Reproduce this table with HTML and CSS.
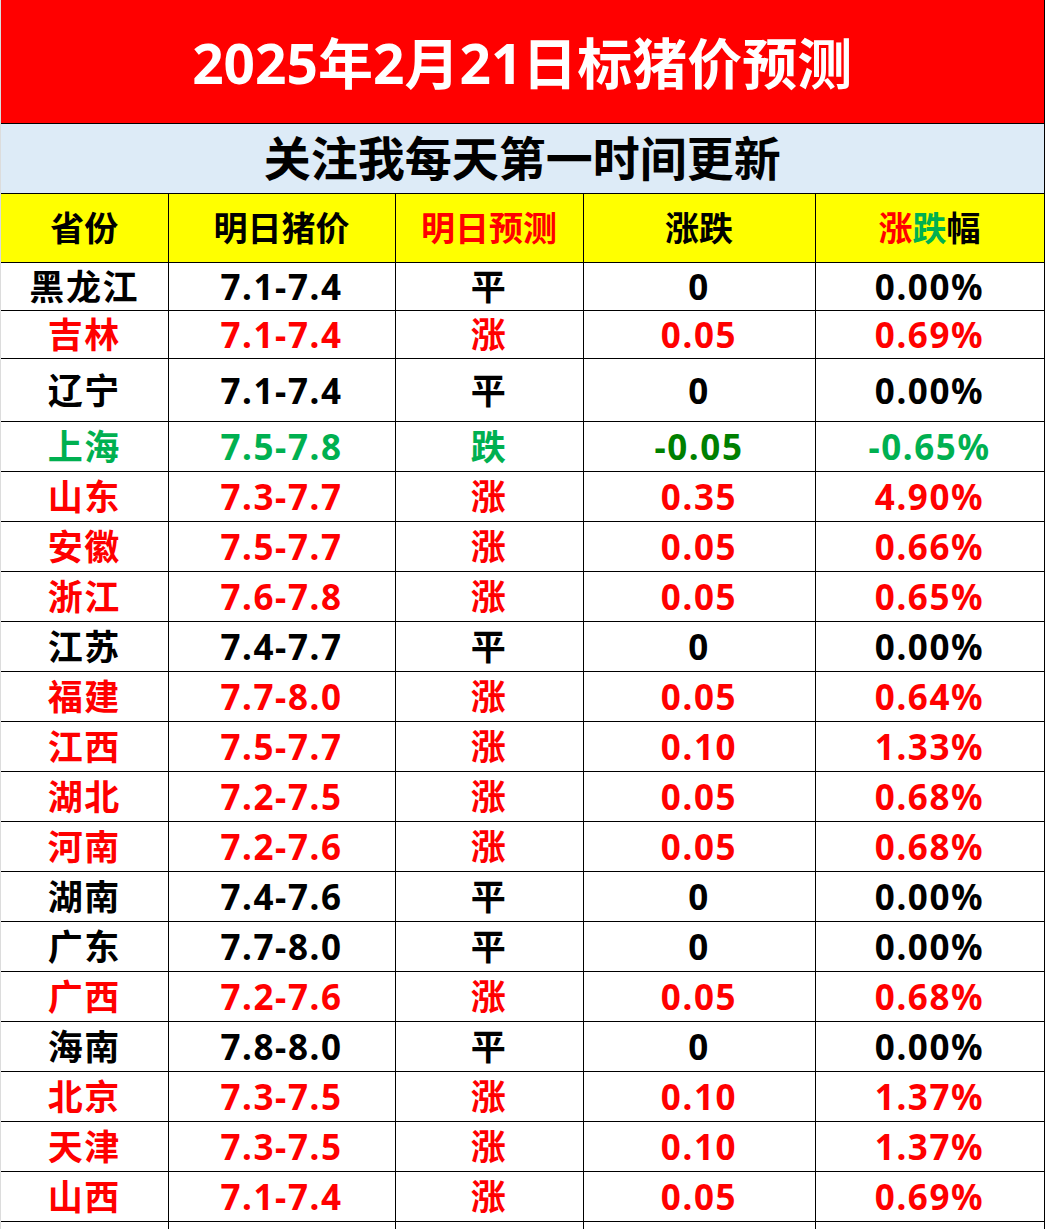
FILE: index.html
```html
<!DOCTYPE html>
<html lang="zh-CN">
<head>
<meta charset="utf-8">
<title>2025年2月21日标猪价预测</title>
<link rel="stylesheet" href="styles.css">
</head>
<body>
<div class="sheet">
<table class="price-table">
  <colgroup>
    <col class="c1"><col class="c2"><col class="c3"><col class="c4"><col class="c5">
  </colgroup>
  <tr class="title-row"><td colspan="5">2025年2月21日标猪价预测</td></tr>
  <tr class="sub-row"><td colspan="5">关注我每天第一时间更新</td></tr>
  <tr class="head-row">
    <td>省份</td><td>明日猪价</td><td class="red">明日预测</td><td>涨跌</td>
    <td><span class="red">涨</span><span class="green">跌</span>幅</td>
  </tr>
  <tr class="r48"><td>黑龙江</td><td>7.1-7.4</td><td>平</td><td>0</td><td>0.00%</td></tr>
  <tr class="r48 red"><td>吉林</td><td>7.1-7.4</td><td>涨</td><td>0.05</td><td>0.69%</td></tr>
  <tr class="r63"><td>辽宁</td><td>7.1-7.4</td><td>平</td><td>0</td><td>0.00%</td></tr>
  <tr class="green"><td>上海</td><td>7.5-7.8</td><td>跌</td><td class="dkgreen">-0.05</td><td>-0.65%</td></tr>
  <tr class="red"><td>山东</td><td>7.3-7.7</td><td>涨</td><td>0.35</td><td>4.90%</td></tr>
  <tr class="red"><td>安徽</td><td>7.5-7.7</td><td>涨</td><td>0.05</td><td>0.66%</td></tr>
  <tr class="red"><td>浙江</td><td>7.6-7.8</td><td>涨</td><td>0.05</td><td>0.65%</td></tr>
  <tr><td>江苏</td><td>7.4-7.7</td><td>平</td><td>0</td><td>0.00%</td></tr>
  <tr class="red"><td>福建</td><td>7.7-8.0</td><td>涨</td><td>0.05</td><td>0.64%</td></tr>
  <tr class="red"><td>江西</td><td>7.5-7.7</td><td>涨</td><td>0.10</td><td>1.33%</td></tr>
  <tr class="red"><td>湖北</td><td>7.2-7.5</td><td>涨</td><td>0.05</td><td>0.68%</td></tr>
  <tr class="red"><td>河南</td><td>7.2-7.6</td><td>涨</td><td>0.05</td><td>0.68%</td></tr>
  <tr><td>湖南</td><td>7.4-7.6</td><td>平</td><td>0</td><td>0.00%</td></tr>
  <tr><td>广东</td><td>7.7-8.0</td><td>平</td><td>0</td><td>0.00%</td></tr>
  <tr class="red"><td>广西</td><td>7.2-7.6</td><td>涨</td><td>0.05</td><td>0.68%</td></tr>
  <tr><td>海南</td><td>7.8-8.0</td><td>平</td><td>0</td><td>0.00%</td></tr>
  <tr class="red"><td>北京</td><td>7.3-7.5</td><td>涨</td><td>0.10</td><td>1.37%</td></tr>
  <tr class="red"><td>天津</td><td>7.3-7.5</td><td>涨</td><td>0.10</td><td>1.37%</td></tr>
  <tr class="red"><td>山西</td><td>7.1-7.4</td><td>涨</td><td>0.05</td><td>0.69%</td></tr>
  <tr><td></td><td></td><td></td><td></td><td></td></tr>
</table>
</div>
</body>
</html>
```
FILE: styles.css
```css
html, body {
  margin: 0;
  padding: 0;
  background: #ffffff;
  overflow: hidden;
}
.sheet {
  width: 1045px;
  height: 1229px;
  overflow: hidden;
  border-left: 1px solid #dcdcdc;
  box-sizing: border-box;
}
.price-table {
  table-layout: fixed;
  border-collapse: collapse;
  width: 1043px;
  font-family: "Noto Sans", "Noto Sans CJK SC", sans-serif;
  font-weight: 700;
  color: #000;
}
.c1 { width: 167px; }
.c2 { width: 227px; }
.c3 { width: 188px; }
.c4 { width: 232px; }
.c5 { width: 229px; }
.price-table td {
  border: 1px solid #000;
  text-align: center;
  vertical-align: middle;
  padding: 0;
  font-size: 35px;
  letter-spacing: 1.6px;
  height: 49px;
  line-height: 1;
  white-space: nowrap;
}
.price-table tr:first-child td { border-top: none; border-left: none; }
.price-table td:first-child { border-left: none; }
.title-row td {
  background: #ff0000;
  color: #ffffff;
  font-size: 55px;
  height: 121px;
  letter-spacing: 0;
  padding-top: 2px;
}
.sub-row td {
  background: #ddebf7;
  font-size: 47px;
  height: 69px;
  letter-spacing: 0;
}
.head-row td {
  background: #ffff00;
  height: 68px;
  font-size: 34px;
  letter-spacing: 0;
}
.r48 td { height: 47px; }
.r63 td { height: 62px; }
.red, .red td { color: #ff0000; }
.green, .green td { color: #00b050; }
.price-table td.dkgreen { color: #008000; }
.head-row td.red { color: #ff0000; }
.head-row .green { color: #00b050; }
```
